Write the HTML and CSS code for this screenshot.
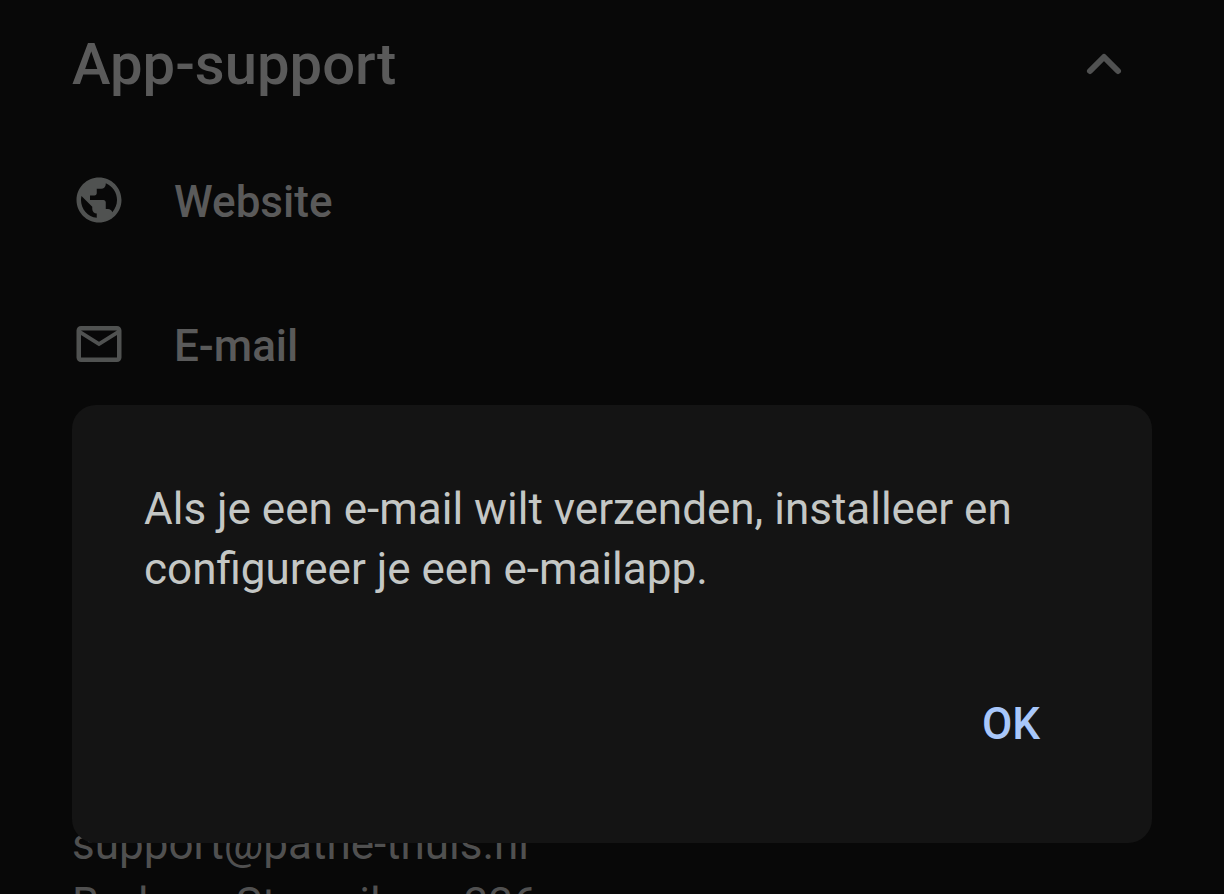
FILE: index.html
```html
<!DOCTYPE html>
<html lang="nl">
<head>
    <meta charset="UTF-8">
    <meta name="viewport" content="width=device-width, initial-scale=1.0">
    <title>App-support</title>
    <link rel="stylesheet" href="styles.css">
</head>
<body>
    <main class="support">
        <header class="support-header">
            <h1>App-support</h1>
            <button class="toggle" aria-label="Inklappen" aria-expanded="true">
                <svg viewBox="0 0 48 48" width="48" height="48">
                    <path d="M10 31 L24 17 L38 31"/>
                </svg>
            </button>
        </header>

        <nav class="links">
            <a class="link" href="#website">
                <svg viewBox="0 0 24 24" width="54" height="54">
                    <path d="M12 2C6.48 2 2 6.48 2 12s4.48 10 10 10 10-4.48 10-10S17.52 2 12 2zm-1 17.93c-3.95-.49-7-3.85-7-7.93 0-.62.08-1.21.21-1.79L9 15v1c0 1.1.9 2 2 2v1.93zm6.9-2.54c-.26-.81-1-1.39-1.9-1.39h-1v-3c0-.55-.45-1-1-1H8v-2h2c.55 0 1-.45 1-1V7h2c1.1 0 2-.9 2-2v-.41c2.93 1.19 5 4.06 5 7.41 0 2.08-.8 3.97-2.1 5.39z"/>
                </svg>
                <span>Website</span>
            </a>
            <a class="link" href="#email">
                <svg viewBox="0 0 24 24" width="54" height="54">
                    <path d="M22 6c0-1.100-.9-2-2-2H4c-1.100 0-2 .9-2 2v12c0 1.100.9 2 2 2h16c1.100 0 2-.9 2-2V6zm-2 0l-8 5-8-5h16zm0 12H4V8l8 5 8-5v10z"/>
                </svg>
                <span>E-mail</span>
            </a>
        </nav>

        <address class="contact">
            support@pathe-thuis.nl<br>
            Barbara Strozzilaan 336
        </address>
    </main>

    <div class="dialog" role="alertdialog" aria-modal="true" aria-describedby="melding">
        <p id="melding">Als je een e-mail wilt verzenden, installeer en configureer je een e-mailapp.</p>
        <div class="dialog-actions">
            <button class="ok">OK</button>
        </div>
    </div>
</body>
</html>
```

FILE: styles.css
```css
* {
    box-sizing: border-box;
}
body {
    margin: 0;
    background-color: #080808;
    color: #5a5a5a;
    font-family: Roboto, "Liberation Sans", sans-serif;
    overflow: hidden;
}
button {
    padding: 0;
    border: none;
    background: none;
    font-family: inherit;
    cursor: pointer;
}
.support {
    padding: 32px 72px 0;
}
.support-header {
    display: flex;
    justify-content: space-between;
    align-items: center;
    height: 64px;
    padding-right: 24px;
}
h1 {
    margin: 0;
    font-size: 58px;
    font-weight: 500;
    line-height: 64px;
}
.toggle {
    height: 48px;
}
.toggle path {
    fill: none;
    stroke: #505151;
    stroke-width: 6;
    stroke-linecap: round;
    stroke-linejoin: round;
}
.links {
    margin-top: 32px;
}
.link {
    display: flex;
    align-items: center;
    gap: 48px;
    height: 144px;
    color: inherit;
    font-size: 44px;
    font-weight: 500;
    text-decoration: none;
}
.link span {
    padding-top: 4px;
}
.link svg {
    fill: #505251;
}
.contact {
    margin-top: 398px;
    font-size: 44px;
    font-style: normal;
    line-height: 60px;
    color: #505050;
}
/* Melding ligt over de pagina heen */
.dialog {
    position: absolute;
    top: 405px;
    left: 72px;
    right: 72px;
    padding: 74px 72px;
    border-radius: 24px;
    background-color: #141414;
}
.dialog p {
    margin: 0;
    color: #c4c7c5;
    font-size: 44px;
    line-height: 60px;
}
.dialog-actions {
    display: flex;
    justify-content: flex-end;
    margin-top: 80px;
    padding-right: 40px;
}
.ok {
    height: 90px;
    color: #a8c7fa;
    font-size: 44px;
    font-weight: 500;
}
```
